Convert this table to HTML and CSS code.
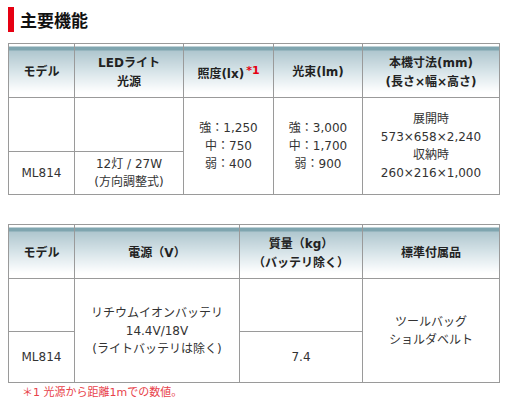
FILE: index.html
```html
<!DOCTYPE html>
<html lang="ja">
<head>
<meta charset="utf-8">
<link rel="stylesheet" href="styles.css">
</head>
<body>
<h2 class="title">主要機能</h2>

<table class="spec spec1">
  <colgroup>
    <col class="c-model"><col class="c-led"><col class="c-lux"><col class="c-lm"><col>
  </colgroup>
  <thead>
    <tr>
      <th>モデル</th>
      <th>LEDライト<br>光源</th>
      <th>照度(lx)<sup class="ref">*1</sup></th>
      <th>光束(lm)</th>
      <th>本機寸法(mm)<br>(長さ×幅×高さ)</th>
    </tr>
  </thead>
  <tbody>
    <tr class="r1">
      <td></td>
      <td></td>
      <td rowspan="2">強：1,250<br>中：750<br>弱：400</td>
      <td rowspan="2">強：3,000<br>中：1,700<br>弱：900</td>
      <td rowspan="2" class="dim">展開時<br>573×658×2,240<br>収納時<br>260×216×1,000</td>
    </tr>
    <tr class="r2">
      <td>ML814</td>
      <td>12灯 / 27W<br>(方向調整式)</td>
    </tr>
  </tbody>
</table>

<table class="spec spec2">
  <colgroup>
    <col class="c-model"><col class="c-pow"><col class="c-kg"><col>
  </colgroup>
  <thead>
    <tr>
      <th>モデル</th>
      <th>電源（V）</th>
      <th>質量（kg）<br>（バッテリ除く）</th>
      <th>標準付属品</th>
    </tr>
  </thead>
  <tbody>
    <tr class="r1">
      <td></td>
      <td rowspan="2">リチウムイオンバッテリ<br>14.4V/18V<br>(ライトバッテリは除く)</td>
      <td></td>
      <td rowspan="2">ツールバッグ<br>ショルダベルト</td>
    </tr>
    <tr class="r2">
      <td>ML814</td>
      <td>7.4</td>
    </tr>
  </tbody>
</table>

<p class="note">＊1 光源から距離1mでの数値。</p>
</body>
</html>
```

FILE: styles.css
```css
html, body {
  margin: 0;
  padding: 0;
  background: #fff;
}
body {
  padding: 0 8px;
  font-family: "DejaVu Sans", "Noto Sans CJK JP", sans-serif;
  font-size: 12px;
  color: #333;
}
.title {
  margin: 7px 0 0 0;
  height: 25px;
  line-height: 25px;
  border-left: 6px solid #e60012;
  padding-left: 6px;
  font-family: "Noto Sans CJK JP", sans-serif;
  font-size: 17px;
  font-weight: bold;
  color: #111;
}
.spec {
  width: 492px;
  border-collapse: collapse;
  table-layout: fixed;
  margin-top: 11px;
}
.spec2 {
  margin-top: 29px;
}
.spec1 .c-model, .spec2 .c-model { width: 66px; }
.spec1 .c-led { width: 109px; }
.spec1 .c-lux { width: 90px; }
.spec1 .c-lm { width: 89px; }
.spec2 .c-pow { width: 165px; }
.spec2 .c-kg { width: 123px; }

.spec th, .spec td {
  border: 1px solid #9a9a9a;
  text-align: center;
  vertical-align: middle;
  padding: 0 4px;
  line-height: 18px;
}
.spec th {
  height: 54px;
  padding-top: 4px;
  box-sizing: border-box;
  font-family: "DejaVu Sans", "Noto Sans CJK JP", sans-serif;
  font-weight: bold;
  font-size: 12px;
  color: #222;
  line-height: 19px;
  background: linear-gradient(to bottom, #ffffff 0, #ffffff 2px, #7fa5af 2px, #7fa5af 6px, #aec6ce 6px, #dde8ec 30px, #ffffff 48px);
}
.spec td {
  color: #333;
}
.spec1 .r1 td { height: 53px; }
.spec1 .r2 td { height: 42px; }
.spec2 .r1 td { height: 52px; }
.spec2 .r2 td { height: 50px; }
.spec .dim {
  line-height: 18px;
}
.ref {
  color: #e60012;
  font-size: 11px;
  vertical-align: 4px;
  margin-left: 2px;
}
.note {
  margin: 3px 0 0 14px;
  font-size: 11px;
  line-height: 14px;
  color: #e8424a;
}
```
